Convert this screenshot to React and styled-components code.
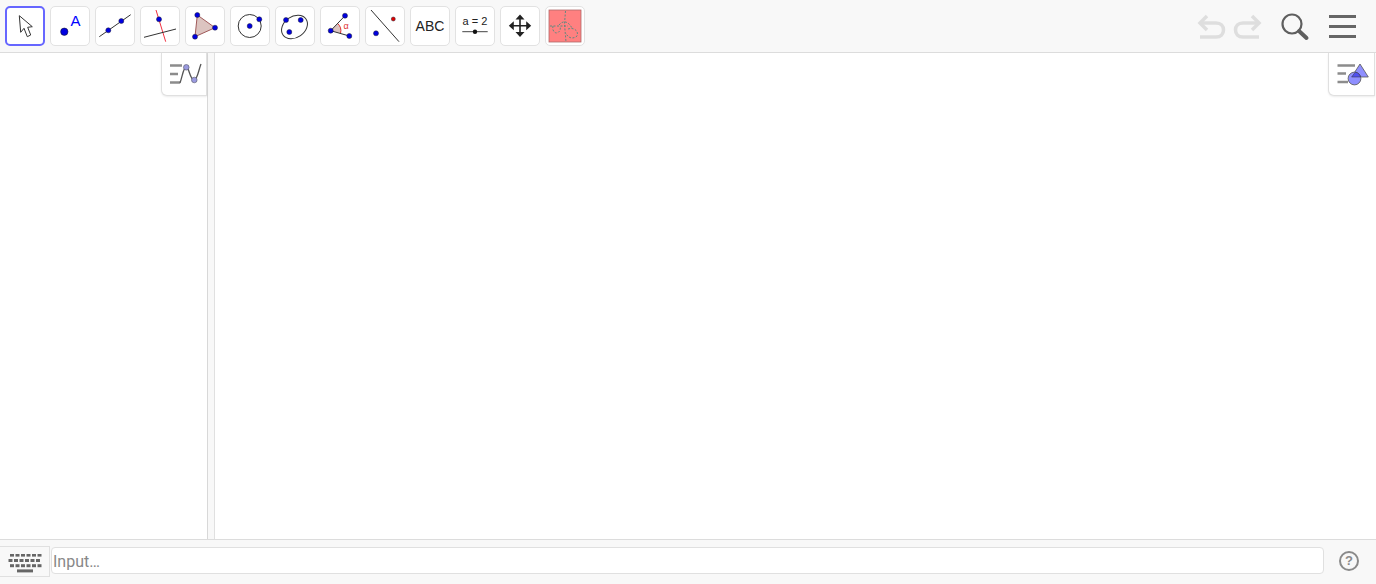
import React from "react";
import styled, { createGlobalStyle } from "styled-components";

const Global = createGlobalStyle`
  html, body { margin: 0; padding: 0; height: 100%; background: #fff; overflow: hidden; }
  #root { height: 100%; }
`;
const Page = styled.div`
  height: 584px; display: flex; flex-direction: column; background: #fff;
  font-family: Roboto, "Liberation Sans", sans-serif;
`;
const Toolbar = styled.header`
  height: 52px; flex: none; box-sizing: content-box; display: flex; align-items: flex-start;
  justify-content: space-between; background: #f8f8f8; border-bottom: 1px solid #dcdcdc;
`;
const ToolGroup = styled.div`display: flex; gap: 5px; padding: 6px 0 0 5px;`;
const ToolButton = styled.button`
  width: 40px; height: 40px; box-sizing: border-box; padding: 0; margin: 0; background: #fff;
  border-radius: 5px; display: flex; align-items: center; justify-content: center;
  position: relative; overflow: visible;
  border: ${p => (p.$selected ? "2px solid #6666ff" : "1px solid #e2e2e2")};
  svg { position: absolute; left: ${p => (p.$selected ? "-2px" : "-1px")}; top: ${p => (p.$selected ? "-2px" : "-1px")}; }
`;
const AbcLabel = styled.span`font: 14px "Liberation Sans", sans-serif; color: #222; letter-spacing: .1px;`;
const Actions = styled.div`position: relative; width: 180px; height: 52px;`;
const ActionSvg = styled.svg`display: block;`;
const Main = styled.main`flex: 1; min-height: 0; display: flex; position: relative;`;
const AlgebraPanel = styled.section`width: 207px; flex: none; background: #fff; position: relative;`;
const Splitter = styled.div`
  width: 6px; flex: none; background: #f8f8f8; border-left: 1px solid #d8d8d8; border-right: 1px solid #e0e0e0;
`;
const GraphicsPanel = styled.section`flex: 1; background: #fff; position: relative;`;
const StyleTab = styled.button`
  position: absolute; top: 0; right: ${p => p.$right}px; width: ${p => p.$width}px; height: 43px; padding: 0; box-sizing: border-box;
  background: #fff; border: 1px solid #e0e0e0; border-top: none; border-bottom-left-radius: 6px;
  box-shadow: 0 1px 2px rgba(0,0,0,.08);
  svg { position: absolute; right: -1px; top: 0; display: block; }
`;
const InputBar = styled.footer`
  height: 45px; flex: none; box-sizing: border-box; display: flex; align-items: flex-start; background: #f8f8f8;
  border-top: 1px solid #dcdcdc;
`;
const KeyboardButton = styled.button`
  width: 50px; height: 31px; margin-top: 6px; flex: none; padding: 0; box-sizing: border-box; background: #f8f8f8;
  border: 1px solid #e0e0e0; border-left: none; display: flex; align-items: center; justify-content: center;
`;
const InputBox = styled.div`
  flex: 1; height: 27px; margin: 7px 0 0 1px; box-sizing: border-box; background: #fff; border: 1px solid #e0e0e0;
  border-radius: 4px; padding-left: 1px; font-size: 16px; line-height: 28px; color: #888;
`;
const HelpWrap = styled.div`width: 50px; margin-right: 2px; flex: none; height: 42px; display: flex; align-items: center; justify-content: center;`;
const HelpCircle = styled.div`
  width: 20px; height: 20px; box-sizing: border-box; border: 2px solid #8a8a8a; border-radius: 50%; color: #8a8a8a;
  font: bold 13px/16px "Liberation Sans", sans-serif; text-align: center;
`;

const B = "#0000e0";
const Dot = ({ x, y, r = 2.5, f = B }) => <circle cx={x} cy={y} r={r} fill={f} stroke="#223" strokeWidth=".5" />;
const Icon = ({ children }) => <svg width="40" height="40" viewBox="0 0 40 40">{children}</svg>;

const tools = [
  <Icon><path d="M14.3 9.7 15.7 26.3 19 22.3 22.3 30.7 25.7 29 22.7 21.3 27.3 20.7Z" fill="#fff" stroke="#333" strokeWidth="1" strokeLinejoin="round" /></Icon>,
  <Icon><circle cx="14.3" cy="25.7" r="3.7" fill={B} stroke="#111" strokeWidth=".5" /><text x="25.5" y="19.7" textAnchor="middle" fontSize="15" fontFamily="Liberation Sans" fill="#0000ff">A</text></Icon>,
  <Icon><path d="M4.3 30.7 35.7 8.7" stroke="#333" strokeWidth="1" /><Dot x={13.3} y={24.3} /><Dot x={26.3} y={15} /></Icon>,
  <Icon><path d="M16 4 25.7 35.7" stroke="#f03040" strokeWidth="1" /><path d="M4 31.3 36 23" stroke="#333" strokeWidth="1" /><Dot x={19} y={13.3} /></Icon>,
  <Icon><path d="M12.3 9 30 21.7 10 30.7Z" fill="#dcc4c0" stroke="#a05a5a" strokeWidth="1" /><Dot x={12.3} y={9} /><Dot x={30} y={21.7} /><Dot x={10} y={30.7} /></Icon>,
  <Icon><circle cx="19.7" cy="20" r="11.5" fill="none" stroke="#333" strokeWidth="1" /><Dot x={19.7} y={20} /><Dot x={29.3} y={13.3} /></Icon>,
  <Icon><ellipse cx="19.5" cy="21" rx="14" ry="10.5" transform="rotate(-35 19.5 21)" fill="none" stroke="#333" strokeWidth="1" /><Dot x={11} y={14} /><Dot x={25.7} y={14} /><Dot x={14.3} y={26} /></Icon>,
  <Icon><path d="M10.7 24.7 17.5 17.3A10 10 0 0 1 20.5 27.3Z" fill="#dcc4c0" /><path d="M17.5 17.3A10 10 0 0 1 20.5 27.3" fill="none" stroke="#e03030" strokeWidth="1" /><path d="M25 9.7 10.7 24.7 29.3 30" fill="none" stroke="#333" strokeWidth="1" /><Dot x={10.7} y={24.7} /><Dot x={25} y={9.7} /><Dot x={29.3} y={30} /><text x="26" y="22.5" textAnchor="middle" fontSize="9" fontFamily="Liberation Sans" fill="#e03030">α</text></Icon>,
  <Icon><path d="M6 4 34 35.7" stroke="#333" strokeWidth="1" /><Dot x={28.3} y={13} r={2} f="#e00000" /><Dot x={11} y={27.3} /></Icon>,
  <AbcLabel>ABC</AbcLabel>,
  <Icon><text x="20" y="19" textAnchor="middle" fontSize="11" fontFamily="Liberation Sans" fill="#222">a = 2</text><path d="M7.3 25.7H32.7" stroke="#444" strokeWidth="1" /><circle cx="20" cy="25.7" r="2.2" fill="#111" /></Icon>,
  <Icon><path d="M20 11V28.5M11.5 19.7H28.5" stroke="#222" strokeWidth="1.6" /><path d="M20 8.5 24.5 13.5H15.5ZM20 31 24.5 26H15.5ZM8.8 19.7 13.8 15.2V24.2ZM31.2 19.7 26.2 15.2V24.2Z" fill="#222" /></Icon>,
  <Icon><rect x="4" y="4" width="32" height="32" fill="#ff8080" stroke="#b06a6a" strokeWidth=".8" /><g fill="none" stroke="#5f8a80" strokeWidth="1" strokeDasharray="2 1.5"><path d="M20.5 5 19.5 18 21 36M5 20H23M8 20C7 24 9 27 12 27 15 26 16 23 15 20M23 23C29 21 34 25 32 30 29 33 23 33 21 27M14 19C18 14 23 15 27 22" /></g></Icon>,
];

const AlgebraIcon = () => (
  <svg width="46" height="43" viewBox="0 0 46 43">
    <path d="M9 12.5H21M9 21H17M9 29.5H19" stroke="#8c8c8c" strokeWidth="2.4" />
    <path d="M19 30C21.5 23 22.5 14 25.3 14 28 14 29 27 33 27 36.5 27 37.5 17 40 11" fill="none" stroke="#555" strokeWidth="1.3" />
    <circle cx="25.3" cy="14.3" r="2.8" fill="#9a9ae0" stroke="#556" strokeWidth=".6" />
    <circle cx="33.3" cy="27" r="2.8" fill="#9a9ae0" stroke="#556" strokeWidth=".6" />
  </svg>
);
const GraphicsIcon = () => (
  <svg width="46" height="43" viewBox="0 0 46 43">
    <path d="M8.5 12.5H26M8.5 20.5H17M8.5 29H19" stroke="#8c8c8c" strokeWidth="2.4" />
    <path d="M31 11 39.3 24H22.5Z" fill="#8f8fff" stroke="#555" strokeWidth=".8" />
    <circle cx="25.5" cy="25.5" r="6.4" fill="#8f8fff" stroke="#555" strokeWidth=".8" />
    <path d="M26.3 19.2 22.6 24H31.5C31 21.5 29 19.5 26.3 19.2Z" fill="#5050f0" stroke="#333" strokeWidth=".5" />
  </svg>
);
const KeyRow = ({ y, dx, h }) => (
  <>
    {[0, 5.5, 11, 16.5, 22, 27.5].map(x => <rect key={x} x={x + dx} y={y} width="4" height={h} />)}
  </>
);
const KeyboardIcon = () => (
  <svg width="34" height="24" viewBox="0 0 34 24" fill="#666">
    <KeyRow y={4} dx={2} h={2.6} />
    <KeyRow y={9} dx={0.5} h={3} />
    <KeyRow y={14.2} dx={2} h={3} />
    <rect x="9" y="19.4" width="16" height="3" />
  </svg>
);
const ActionIcons = () => (
  <ActionSvg width="180" height="52" viewBox="1196 0 180 52">
    <g fill="none" stroke="#dedede" strokeWidth="3.5">
      <path d="M1200 23H1216C1221 23 1223.5 26 1223.5 30 1223.5 34 1221 37 1216 37H1200" />
      <path d="M1207 16 1200 23 1207 30" />
      <path d="M1259 23H1243C1238 23 1235.5 26 1235.5 30 1235.5 34 1238 37 1243 37H1259" />
      <path d="M1252 16 1259 23 1252 30" />
    </g>
    <circle cx="1292" cy="24" r="9.5" fill="none" stroke="#5f5f5f" strokeWidth="2.2" />
    <path d="M1299 31 1306.5 38" stroke="#5f5f5f" strokeWidth="4" strokeLinecap="round" />
    <path d="M1329 16.5H1356M1329 26.5H1356M1329 36.5H1356" stroke="#666" strokeWidth="3" />
  </ActionSvg>
);

export default function App() {
  return (
    <Page>
      <Global />
      <Toolbar>
        <ToolGroup>
          {tools.map((t, i) => <ToolButton key={i} $selected={i === 0}>{t}</ToolButton>)}
        </ToolGroup>
        <Actions><ActionIcons /></Actions>
      </Toolbar>
      <Main>
        <AlgebraPanel>
          <StyleTab $right={0} $width={46}><AlgebraIcon /></StyleTab>
        </AlgebraPanel>
        <Splitter />
        <GraphicsPanel>
          <StyleTab $right={1} $width={47}><GraphicsIcon /></StyleTab>
        </GraphicsPanel>
      </Main>
      <InputBar>
        <KeyboardButton><KeyboardIcon /></KeyboardButton>
        <InputBox>Input…</InputBox>
        <HelpWrap><HelpCircle>?</HelpCircle></HelpWrap>
      </InputBar>
    </Page>
  );
}
